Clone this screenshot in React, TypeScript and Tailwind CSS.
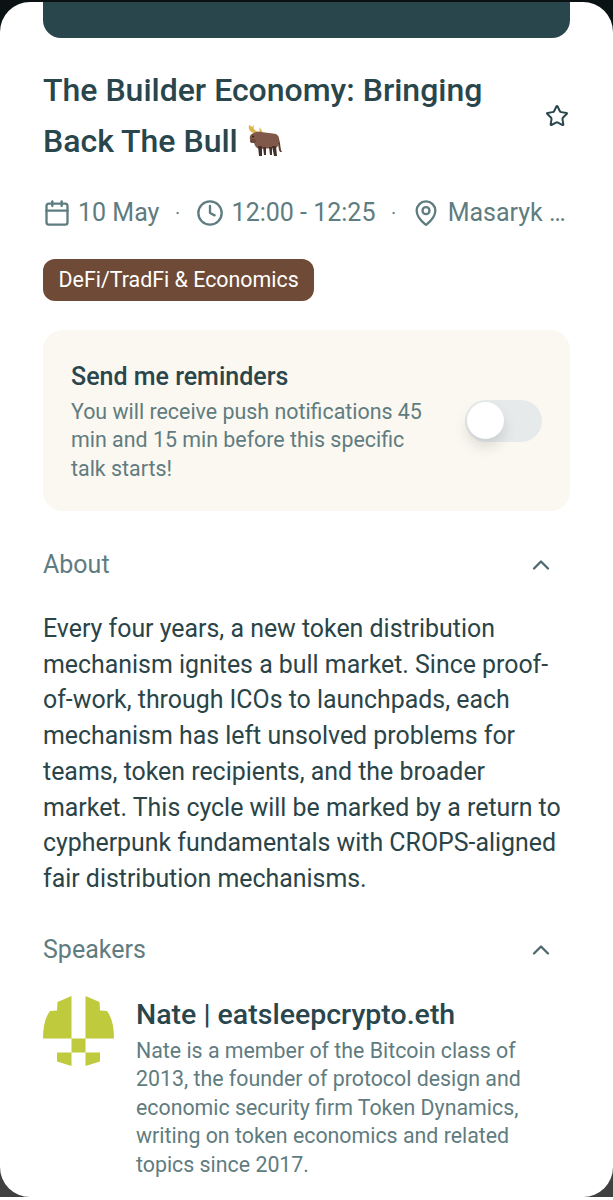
import { Calendar, Clock, MapPin, Star, ChevronUp } from "lucide-react"

const BullIcon = () => (
  <svg width="36" height="33" viewBox="0 0 36 33" className="shrink-0">
    <path d="M2 1c-1 4 1 7 5 8 2 .5 5 0 7-1-3 0-6-1-7-3-1-1 0-3 0-4-2 3-3 1-5 0z" fill="#d9b44a" />
    <path d="M12 3c1 2 0 4 1 5l3 1c-1-2-2-4-4-6z" fill="#d9b44a" />
    <path d="M31 12c2 4 2 9 3 14l1 2-2 0-1-2c-1-5-1-9-2-12z" fill="#5c4033" />
    <path d="M3 12c2-3 7-5 11-4 5 1 11 1 15 2 2 1 3 3 3 6l-1 6-2 2-17 1c-3-1-4-3-5-6-2 0-5-2-4-7z" fill="#80594b" />
    <path d="M11 22h4v10h-3zM16 23h3v8h-2zM25 22h4l1 10h-3zM22 23h3v8h-2z" fill="#46302a" />
    <ellipse cx="6" cy="17" rx="3" ry="2" fill="#6b4a3e" />
    <circle cx="6" cy="12.500" r="1" fill="#2b1d18" />
  </svg>
)

const NateLogo = () => (
  <svg width="72" height="72" viewBox="0 0 72 72" className="shrink-0">
    <g fill="#bfca3c">
      <path d="M28.500 0 14.500 6 14 14.500 7 15C2.500 21 0 30 0 42.500H28.500z" />
      <path d="M42.500 0 56.500 6 57 14.500 64 15C68.500 21 71 30 71 42.500H42.500z" />
      <rect x="28.500" y="42.500" width="14" height="14" />
      <path d="M14 56.500H28.500V70L14 65.500z" />
      <path d="M42.500 56.500H57V65.500L42.500 70z" />
    </g>
  </svg>
)

const MetaDot = () => <span className="mx-[15.500px] text-[20px] leading-none">·</span>

const SectionHeader = ({ label }: { label: string }) => (
  <div className="flex items-center justify-between pr-[15px]">
    <span className="text-[25px] leading-[32px] text-[#5f7c80]">{label}</span>
    <ChevronUp size={28} strokeWidth={2} className="text-[#4f6a6e]" />
  </div>
)

export default function App() {
  return (
    <div className="h-[1200px] w-[613px] overflow-hidden bg-[linear-gradient(to_bottom,#0a1214_600px,#404040_600px,#404040_1197px,#ffffff_1197px)] font-['Roboto',sans-serif]">
      <div className="h-[2px]" />
      <div className="h-[1195px] overflow-hidden rounded-[30px] bg-white px-[43px]">
        <div className="h-[36px] rounded-b-[18px] bg-[#2a464d]" />

        {/* Title */}
        <div className="mt-[27px] flex items-center justify-between">
          <h1 className="w-[460px] text-[32px] font-medium leading-[50.500px] text-[#2a464d]">
            The Builder Economy: Bringing
            <br />
            <span className="inline-flex items-center gap-[9px]">
              Back The Bull <BullIcon />
            </span>
          </h1>
          <Star size={24} strokeWidth={2} className="mr-[1px] text-[#2a464d]" />
        </div>

        {/* Meta */}
        <div className="mt-[27px] flex h-[40px] items-center whitespace-nowrap text-[25px] text-[#5f7c80]">
          <Calendar size={28} strokeWidth={2} className="mr-[7px]" />
          10 May
          <MetaDot />
          <Clock size={28} strokeWidth={2} className="mr-[8px]" />
          12:00 - 12:25
          <MetaDot />
          <MapPin size={28} strokeWidth={2} className="mr-[8px]" />
          Masaryk …
        </div>

        {/* Tag */}
        <div className="mt-[26px] flex h-[42px] w-fit items-center rounded-[12px] bg-[#6f4a36] px-[15.500px] text-[21.400px] text-white">
          DeFi/TradFi & Economics
        </div>

        {/* Reminder */}
        <div className="mt-[29px] flex h-[181px] items-center justify-between rounded-[20px] bg-[#fbf7f1] pl-[28px] pr-[28px]">
          <div className="w-[352px] pt-[4px]">
            <div className="text-[25px] font-medium leading-[30px] text-[#2a464d]">Send me reminders</div>
            <p className="mt-[6px] text-[21.400px] leading-[28.500px] text-[#5f7c80]">
              You will receive push notifications 45 min and 15 min before this specific talk starts!
            </p>
          </div>
          <div className="relative h-[42px] w-[77px] rounded-full bg-[#e6eaeb]">
            <div className="absolute left-[2px] top-[2px] h-[37px] w-[37px] rounded-full bg-white shadow-[0_8px_14px_rgba(0,0,0,0.12)]" />
          </div>
        </div>

        {/* About */}
        <div className="mt-[38px]">
          <SectionHeader label="About" />
        </div>
        <p className="mt-[30px] text-[24.900px] leading-[35.700px] text-[#2a4448]">
          Every four years, a new token distribution mechanism ignites a bull market. Since proof-of-work, through ICOs to launchpads, each mechanism has left unsolved problems for teams, token recipients, and the broader market. This cycle will be marked by a return to cypherpunk fundamentals with CROPS-aligned fair distribution mechanisms.
        </p>

        {/* Speakers */}
        <div className="mt-[37px]">
          <SectionHeader label="Speakers" />
        </div>
        <div className="mt-[30px] flex gap-[21px]">
          <NateLogo />
          <div className="w-[395px] pt-[1px]">
            <div className="text-[28.500px] font-medium leading-[36px] text-[#2a464d]">Nate | eatsleepcrypto.eth</div>
            <p className="mt-[4px] text-[21.350px] leading-[28.500px] text-[#5f7c80]">
              Nate is a member of the Bitcoin class of 2013, the founder of protocol design and economic security firm Token Dynamics, writing on token economics and related topics since 2017.
            </p>
          </div>
        </div>
      </div>
    </div>
  )
}
